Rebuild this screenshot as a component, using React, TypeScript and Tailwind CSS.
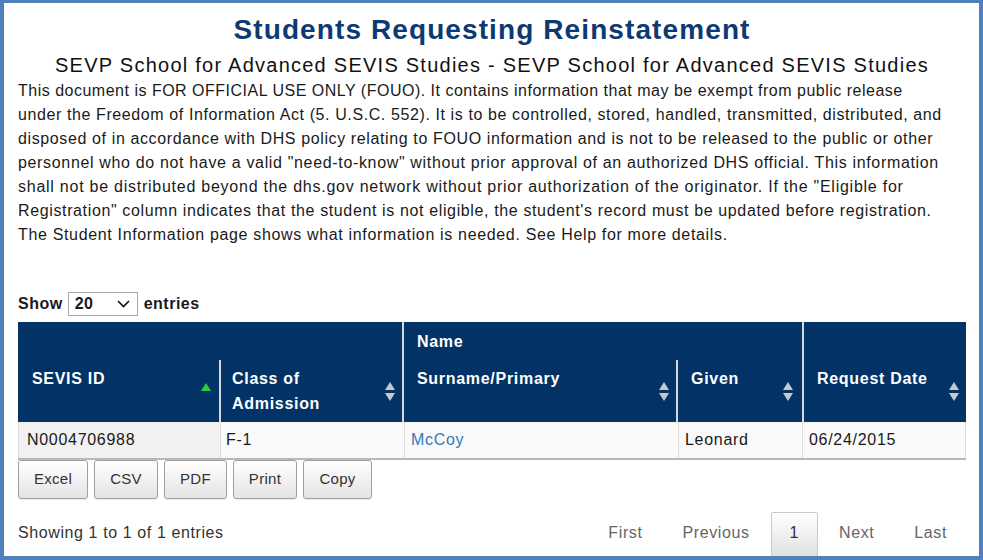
import React from "react";

function SortIcon({ active }: { active?: boolean }) {
  if (active) {
    return (
      <svg width="10" height="19" viewBox="0 0 10 19" className="absolute right-[8px] top-[22px]">
        <polygon points="5,1 10,9 0,9" fill="#2ecc40" />
      </svg>
    );
  }
  return (
    <svg width="10" height="19" viewBox="0 0 10 19" className="absolute right-[7px] top-[22px]">
      <polygon points="5,0 10,8 0,8" fill="#c4c8cf" />
      <polygon points="0,11 10,11 5,19" fill="#c4c8cf" />
    </svg>
  );
}

const lines: [string, string][] = [
  ["This document is FOR OFFICIAL USE ONLY (FOUO). It contains information that may be exempt from public release", "tracking-[0.5px]"],
  ["under the Freedom of Information Act (5. U.S.C. 552). It is to be controlled, stored, handled, transmitted, distributed, and", "tracking-[0.6px]"],
  ["disposed of in accordance with DHS policy relating to FOUO information and is not to be released to the public or other", "tracking-[0.62px]"],
  ["personnel who do not have a valid \"need-to-know\" without prior approval of an authorized DHS official. This information", "tracking-[0.66px]"],
  ["shall not be distributed beyond the dhs.gov network without prior authorization of the originator. If the \"Eligible for", "tracking-[0.75px]"],
  ["Registration\" column indicates that the student is not eligible, the student's record must be updated before registration.", "tracking-[0.63px]"],
  ["The Student Information page shows what information is needed. See Help for more details.", "tracking-[0.66px]"],
];

export default function App() {
  return (
    <div className="w-[983px] h-[560px] bg-white border-[#4f81bd] border-l-4 border-r-4 border-t-[3px] border-b-4 overflow-hidden font-['Liberation_Sans',Arial,sans-serif] text-[#1a1a1a]">
      <div className="pl-[14px] pr-[13px] pt-[11px]">
        <h1 className="text-center text-[28px] leading-[32px] font-bold text-[#0d3a73] tracking-[1.1px]">
          Students Requesting Reinstatement
        </h1>
        <h2 className="text-center text-[20px] leading-[25px] mt-[7px] text-[#111] tracking-[1.25px] whitespace-nowrap">
          SEVP School for Advanced SEVIS Studies - SEVP School for Advanced SEVIS Studies
        </h2>
        <div className="mt-[1px] text-[16px] leading-[24px] text-[#1a1a1a]">
          {lines.map(([l, t], i) => (
            <div key={i} className={`whitespace-nowrap ${t}`}>{l}</div>
          ))}
        </div>

        <div className="mt-[45px] flex items-center h-[24px] text-[16px] font-bold text-[#1a1a1a] tracking-[0.5px]">
          <span>Show</span>
          <div className="ml-[5px] w-[70px] h-[24px] border border-[#a9a9a9] bg-white flex items-center justify-between pl-[6px] pr-[7px]">
            <span className="text-[16px] font-bold">20</span>
            <svg width="13" height="8" viewBox="0 0 13 8">
              <polyline points="1,1 6.5,6.5 12,1" fill="none" stroke="#111" strokeWidth="1.6" />
            </svg>
          </div>
          <span className="ml-[6px]">entries</span>
        </div>

        {/* Table header */}
        <div className="mt-[6px] flex bg-[#033366] text-white font-bold text-[16px] leading-[25px] w-[948px] tracking-[0.7px]">
          <div className="w-[384px] flex flex-col">
            <div className="h-[38px]" />
            <div className="flex h-[62px]">
              <div className="relative w-[201px] pl-[14px] pt-[6px]">
                SEVIS ID
                <SortIcon active />
              </div>
              <div className="relative w-[183px] border-l-2 border-[#d4d7dc] pl-[11px] pt-[6px]">
                <div>Class of</div>
                <div>Admission</div>
                <SortIcon />
              </div>
            </div>
          </div>
          <div className="w-[400px] border-l-2 border-[#d4d7dc] flex flex-col">
            <div className="h-[38px] pl-[13px] pt-[7px]">Name</div>
            <div className="flex h-[62px]">
              <div className="relative w-[272px] pl-[13px] pt-[6px]">
                Surname/Primary
                <SortIcon />
              </div>
              <div className="relative w-[124px] border-l-2 border-[#d4d7dc] pl-[13px] pt-[6px]">
                Given
                <SortIcon />
              </div>
            </div>
          </div>
          <div className="w-[164px] border-l-2 border-[#d4d7dc] flex flex-col">
            <div className="h-[38px]" />
            <div className="relative h-[62px] pl-[13px] pt-[6px]">
              Request Date
              <SortIcon />
            </div>
          </div>
        </div>

        {/* Table body */}
        <div className="flex w-[948px] text-[16px] leading-[24px] text-[#1a1a1a] tracking-[0.7px] border-b-2 border-[#b8b8b8]">
          <div className="w-[202px] h-[36px] bg-[#f1f1f1] pl-[8px] pt-[6px] border-l border-[#dddddd]">N0004706988</div>
          <div className="w-[184px] h-[36px] bg-[#f9f9f9] pl-[5px] pt-[6px] border-l border-[#dddddd]">F-1</div>
          <div className="w-[274px] h-[36px] bg-[#f9f9f9] pl-[6px] pt-[6px] border-l border-[#dddddd] text-[#337ab7]">McCoy</div>
          <div className="w-[124px] h-[36px] bg-[#f9f9f9] pl-[6px] pt-[6px] border-l border-[#dddddd]">Leonard</div>
          <div className="w-[164px] h-[36px] bg-[#f9f9f9] pl-[6px] pt-[6px] border-l border-r border-[#dddddd]">06/24/2015</div>
        </div>

        {/* Buttons */}
        <div className="flex gap-[6px] text-[15px] text-[#333] tracking-[0.3px]">
          {[
            ["Excel", "w-[70px]"],
            ["CSV", "w-[64px]"],
            ["PDF", "w-[63px]"],
            ["Print", "w-[64px]"],
            ["Copy", "w-[69px]"],
          ].map(([label, w]) => (
            <div
              key={label}
              className={`${w} h-[39px] flex items-center justify-center rounded-[3px] border border-[#a0a0a0] bg-gradient-to-b from-white to-[#e4e4e4] shadow-[0_1px_1px_rgba(0,0,0,0.08)]`}
            >
              {label}
            </div>
          ))}
        </div>

        {/* Footer */}
        <div className="mt-[13px] flex justify-between text-[16px] leading-[18px] tracking-[0.6px]">
          <div className="pt-[12px] text-[#333]">Showing 1 to 1 of 1 entries</div>
          <div className="flex">
            <div className="px-[19px] pt-[12px] ml-[2px] text-[#666]">First</div>
            <div className="px-[19px] pt-[12px] ml-[2px] text-[#666]">Previous</div>
            <div className="px-[18px] pt-[11px] pb-[20px] ml-[2px] text-[#333] border border-[#cacaca] rounded-t-[2px] bg-gradient-to-b from-white to-[#dcdcdc]">1</div>
            <div className="px-[19px] pt-[12px] ml-[2px] text-[#666]">Next</div>
            <div className="px-[19px] pt-[12px] ml-[2px] text-[#666]">Last</div>
          </div>
        </div>
      </div>
    </div>
  );
}
